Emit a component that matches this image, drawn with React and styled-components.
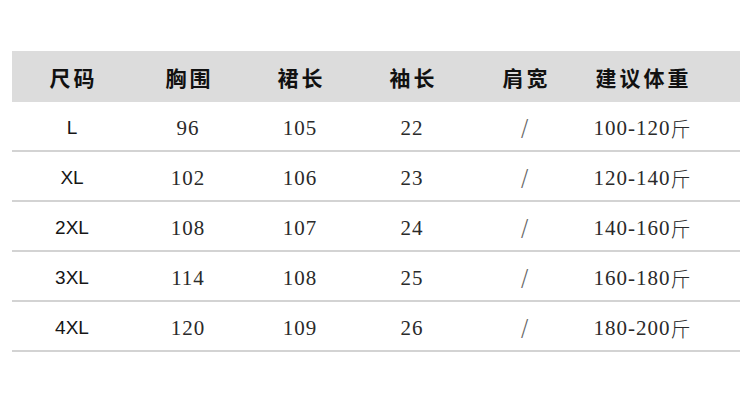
import React from "react";
import styled, { createGlobalStyle } from "styled-components";

const GlobalStyle = createGlobalStyle`
    html, body {
        margin: 0;
        padding: 0;
        background: #fff;
    }
`;

const Page = styled.div`
    width: 750px;
    height: 400px;
    padding: 51px 10px 0 12px;
    box-sizing: border-box;
`;

const Table = styled.div`
    display: grid;
    grid-template-columns: 120px 112px 112px 112px 114px 120px 1fr;
`;

const HeadCell = styled.div`
    height: 51px;
    background: #dcdcdc;
    display: flex;
    align-items: center;
    justify-content: center;
    font-family: "Noto Sans CJK SC", sans-serif;
    font-weight: 700;
    font-size: 21px;
    color: #111;
    letter-spacing: 3px;
    text-indent: 3px;
`;

const Cell = styled.div`
    border-bottom: 2px solid #d3d3d3;
    display: flex;
    align-items: center;
    justify-content: center;
    padding-top: 4px;
    height: 44px;
    color: ${p => (p.$sans ? "#161616" : "#2a2a2a")};
    font-family: ${p => p.$sans
        ? '"Liberation Sans", Arial, sans-serif'
        : '"Liberation Serif", "Noto Sans CJK SC", serif'};
    font-size: ${p => (p.$sans ? "19px" : "21px")};
    letter-spacing: ${p => (p.$sans ? "0" : "1px")};
`;

const Slash = styled.span`
    color: #666;
    font-family: "DejaVu Sans", sans-serif;
    font-weight: 200;
    font-size: 23px;
`;

const Unit = styled.span`
    font-family: "Noto Sans CJK SC", sans-serif;
    font-size: 20px;
    font-weight: 300;
    letter-spacing: 0;
`;

const headers = ["尺码", "胸围", "裙长", "袖长", "肩宽", "建议体重"];

const rows = [
    ["L", "96", "105", "22", "100-120"],
    ["XL", "102", "106", "23", "120-140"],
    ["2XL", "108", "107", "24", "140-160"],
    ["3XL", "114", "108", "25", "160-180"],
    ["4XL", "120", "109", "26", "180-200"],
];

const App = () => {
    return (
        <Page>
            <GlobalStyle />
            <Table>
                {headers.map(h => (
                    <HeadCell key={h}>{h}</HeadCell>
                ))}
                <HeadCell />
                {rows.map(([size, chest, skirt, sleeve, weight]) => (
                    <React.Fragment key={size}>
                        <Cell $sans>{size}</Cell>
                        <Cell>{chest}</Cell>
                        <Cell>{skirt}</Cell>
                        <Cell>{sleeve}</Cell>
                        <Cell><Slash>/</Slash></Cell>
                        <Cell>{weight}<Unit>斤</Unit></Cell>
                        <Cell />
                    </React.Fragment>
                ))}
            </Table>
        </Page>
    );
};

export default App;
